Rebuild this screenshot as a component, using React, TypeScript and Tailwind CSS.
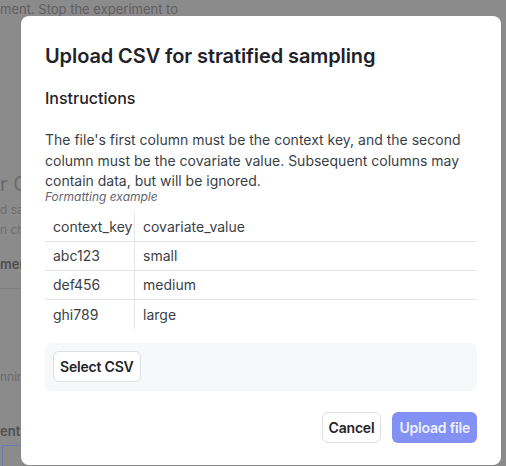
import React from "react";

const rows = [
  ["context_key", "covariate_value"],
  ["abc123", "small"],
  ["def456", "medium"],
  ["ghi789", "large"],
];

export default function App() {
  return (
    <div className="relative w-[506px] h-[466px] overflow-hidden bg-[#8b8b8b]" style={{ fontFamily: "Inter, 'Noto Sans', sans-serif" }}>
      {/* dimmed background page */}
      <div className="flex flex-col text-[#5c5c5c] text-[13px] leading-[16px]">
        <div className="pt-[1px] text-[#606060] whitespace-nowrap">ment. Stop the experiment to</div>
        <div className="mt-[155px] text-[20px] leading-[24px] text-[#6a6a6a]">r C</div>
        <div className="mt-[6px] text-[12px] text-[#6e6e6e]">d sa</div>
        <div className="mt-[4px] text-[12px] text-[#6e6e6e]">n ch</div>
        <div className="mt-[18px] font-semibold text-[#4e4e4e]">ment</div>
        <div className="mt-[16px] h-px w-[30px] bg-[#7f7f7f]" />
        <div className="mt-[80px] text-[12px] text-[#6a6a6a]">nning</div>
        <div className="mt-[38px] font-semibold text-[#4e4e4e]">ent</div>
        <div className="mt-[6px] ml-[2px] h-[30px] w-[22px] border border-[#6f7bb0]" />
      </div>

      {/* modal */}
      <div className="absolute left-[21px] top-[16px] w-[480px] h-[449px] bg-white rounded-[8px] px-[24px] pt-[26px]">
        <h2 className="text-[20px] leading-[28px] font-semibold text-[#1f2329] tracking-[-0.1px]">
          Upload CSV for stratified sampling
        </h2>
        <h3 className="mt-[16px] text-[16px] leading-[24px] font-medium text-[#1f2329]">Instructions</h3>
        <p className="mt-[20px] text-[14px] leading-[20.5px] text-[#3a3f47]">
          The file's first column must be the context key, and the second column must be the covariate value. Subsequent columns may contain data, but will be ignored.
        </p>
        <div className="-mt-[3px] text-[12px] leading-[16px] italic text-[#5f6570]">Formatting example</div>
        <div className="mt-[8px] flex flex-col">
          {rows.map((r, i) => (
            <div
              key={i}
              className={`flex h-[29px] items-center text-[14px] text-[#3a3f47] ${i < rows.length - 1 ? "border-b border-[#e3e5e8]" : ""}`}
            >
              <div className="w-[90px] h-full flex items-center pl-[8px] border-r border-[#e3e5e8]">{r[0]}</div>
              <div className="pl-[8px]">{r[1]}</div>
            </div>
          ))}
        </div>
        <div className="mt-[14px] h-[48px] rounded-[6px] bg-[#f7f8fa] flex items-center px-[8px]">
          <button className="h-[31px] px-[6px] rounded-[6px] border border-[#dcdfe3] bg-white text-[14px] font-semibold text-[#1f2329] tracking-[-0.2px]">
            Select CSV
          </button>
        </div>
        <div className="mt-[21px] flex justify-end gap-[11px]">
          <button className="h-[31px] px-[6px] rounded-[6px] border border-[#dcdfe3] bg-white text-[14px] font-semibold text-[#1f2329] tracking-[-0.2px]">
            Cancel
          </button>
          <button className="h-[31px] px-[7px] rounded-[6px] bg-[#8391f5] text-[14px] font-semibold text-[#eef0ff] tracking-[-0.2px]">
            Upload file
          </button>
        </div>
      </div>
    </div>
  );
}
